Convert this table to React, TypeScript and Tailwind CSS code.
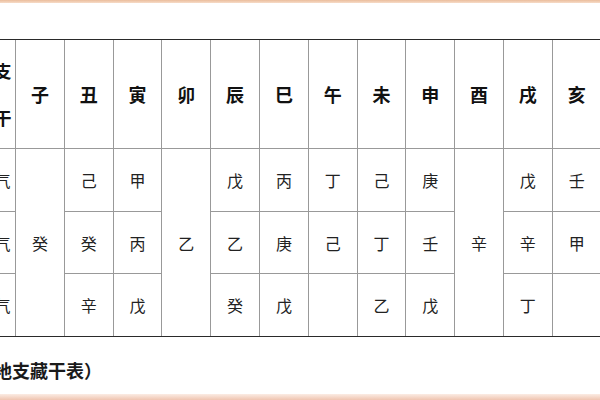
const BRANCHES = [
  { name: "子", hidden: ["", "", ""], merged: "癸" },
  { name: "丑", hidden: ["己", "癸", "辛"] },
  { name: "寅", hidden: ["甲", "丙", "戊"] },
  { name: "卯", hidden: ["", "", ""], merged: "乙" },
  { name: "辰", hidden: ["戊", "乙", "癸"] },
  { name: "巳", hidden: ["丙", "庚", "戊"] },
  { name: "午", hidden: ["丁", "己", ""] },
  { name: "未", hidden: ["己", "丁", "乙"] },
  { name: "申", hidden: ["庚", "壬", "戊"] },
  { name: "酉", hidden: ["", "", ""], merged: "辛" },
  { name: "戌", hidden: ["戊", "辛", "丁"] },
  { name: "亥", hidden: ["壬", "甲", ""] },
];

const ROWS = ["本气", "中气", "余气"];

const font = { fontFamily: '"Noto Sans CJK SC", "Noto Sans", sans-serif' };

export default function App() {
  return (
    <div className="w-[600px] h-[400px] bg-white flex flex-col overflow-hidden" style={font}>
      <div className="h-[3px] bg-gradient-to-b from-[#ebbd9c] to-[#f6dcc8]" />
      <div className="h-[36px]" />

      <div className="ml-[-26px] grid grid-cols-[42px_repeat(12,48.8px)] grid-rows-[108px_63px_62px_63px] border-t-[1.5px] border-b-[1.5px] border-[#2a2a2a] w-max">
        {/* header row */}
        <div className="col-start-1 row-start-1 border-r border-[#999] flex flex-col items-center justify-center gap-[22px] text-[17px] font-semibold text-[#111]">
          <span>地支</span>
          <span>藏干</span>
        </div>
        {BRANCHES.map((b, i) => (
          <div
            key={b.name}
            className="row-start-1 border-r border-[#999] flex items-center justify-center text-[18px] font-semibold text-[#111]"
            style={{ gridColumnStart: i + 2 }}
          >
            {b.name}
          </div>
        ))}

        {/* row labels */}
        {ROWS.map((r, ri) => (
          <div
            key={r}
            className="col-start-1 border-t border-r border-[#999] flex items-center justify-center text-[16px] text-[#222]"
            style={{ gridRowStart: ri + 2 }}
          >
            {r}
          </div>
        ))}

        {/* hidden stems */}
        {BRANCHES.map((b, i) =>
          b.merged ? (
            <div
              key={b.name + "m"}
              className="row-start-2 row-span-3 border-t border-r border-[#999] flex items-center justify-center text-[16px] text-[#222]"
              style={{ gridColumnStart: i + 2 }}
            >
              {b.merged}
            </div>
          ) : (
            b.hidden.map((h, ri) => (
              <div
                key={b.name + ri}
                className="border-t border-r border-[#999] flex items-center justify-center text-[16px] text-[#222]"
                style={{ gridColumnStart: i + 2, gridRowStart: ri + 2 }}
              >
                {h}
              </div>
            ))
          )
        )}
      </div>

      <div className="ml-[-24px] mt-[24px] text-[18px] font-bold text-[#1a1a1a] leading-none">
        （地支藏干表）
      </div>

      <div className="flex-1" />
      <div className="h-[6px] bg-gradient-to-b from-[#fbece4] to-[#efc4b0]" />
    </div>
  );
}
